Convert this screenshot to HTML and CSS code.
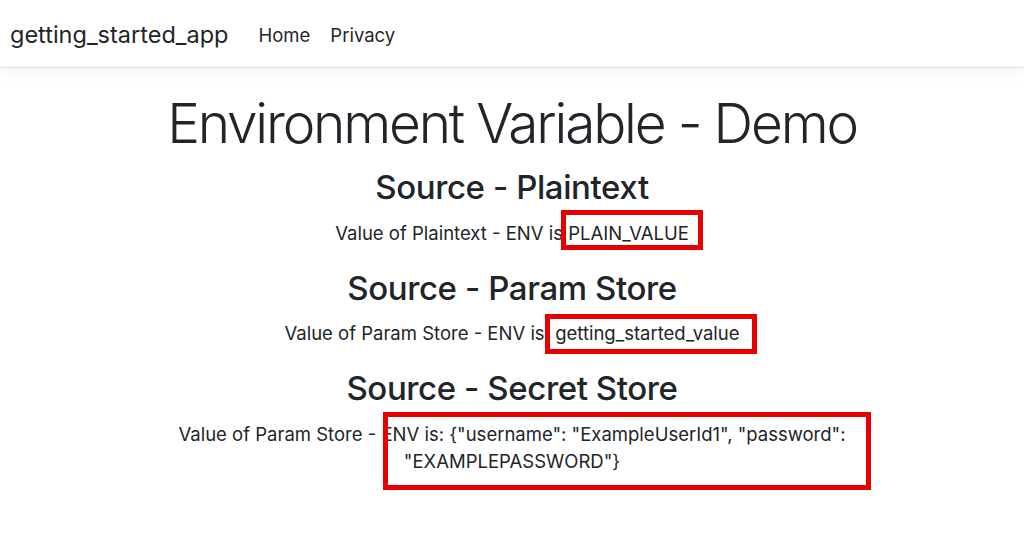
FILE: index.html
```html
<!DOCTYPE html>
<html lang="en">

<head>
    <meta charset="UTF-8">
    <meta name="viewport" content="width=device-width, initial-scale=1.0">
    <title>Home Page - getting_started_app</title>
    <link rel="stylesheet" href="styles.css">
</head>

<body>
    <header>
        <nav class="navbar">
            <a class="navbar-brand" href="#">getting_started_app</a>
            <ul class="navbar-nav">
                <li><a class="nav-link" href="#">Home</a></li>
                <li><a class="nav-link" href="#">Privacy</a></li>
            </ul>
        </nav>
    </header>

    <div class="container">
        <main class="text-center">
            <h1 class="display-4">Environment Variable - Demo</h1>

            <h2>Source - Plaintext</h2>
            <p>Value of Plaintext - ENV is <span class="mark mark-plain">PLAIN_VALUE</span></p>

            <h2>Source - Param Store</h2>
            <p>Value of Param Store - ENV is: <span class="mark mark-param">getting_started_value</span></p>

            <h2>Source - Secret Store</h2>
            <p class="secret">Value of Param Store - ENV is: {"username": "ExampleUserId1", "password": "EXAMPLEPASSWORD"}<span class="mark-box"></span></p>
        </main>
    </div>
</body>

</html>
```

FILE: styles.css
```css
body {
    margin: 0;
    font-family: Inter, "Noto Sans", "Liberation Sans", sans-serif;
    font-size: 18.5px;
    line-height: 1.5;
    color: #212529;
    background-color: #fff;
}

a {
    color: inherit;
    text-decoration: none;
}

.navbar {
    display: flex;
    align-items: center;
    height: 67px;
    padding: 0 10px;
    border-bottom: 1px solid #e1e2e6;
    box-shadow: 0 4px 14px rgba(0, 0, 0, 0.05);
}

.navbar-brand {
    font-size: 23.5px;
    margin-right: 30px;
    padding-top: 2px;
}

.navbar-nav {
    display: flex;
    gap: 20px;
    list-style: none;
    margin: 0;
    padding: 4px 0 0;
}

.nav-link {
    font-size: 18.5px;
    color: #262626;
}

.container {
    max-width: 690px;
    margin: 0 auto;
}

.text-center {
    text-align: center;
}

h1 {
    font-size: 55px;
    font-weight: 300;
    line-height: 1.2;
    margin: 22px -30px 12px;
    letter-spacing: -2.2px;
    white-space: nowrap;
}

h2 {
    font-size: 33px;
    font-weight: 500;
    line-height: 1.2;
    margin: 0 0 12px;
    letter-spacing: -0.4px;
}

p {
    margin: 0 0 22px;
    line-height: 27px;
}

.mark {
    position: relative;
}

.mark::after {
    content: "";
    position: absolute;
    border: 5px solid #e60000;
}

.mark-plain::after {
    left: -7px;
    right: -14px;
    top: -12px;
    bottom: -6px;
}

.mark-param::after {
    left: -10px;
    right: -17px;
    top: -8px;
    bottom: -10px;
}

.secret {
    position: relative;
}

.mark-box {
    position: absolute;
    left: 216px;
    right: -14px;
    top: -9px;
    bottom: -15px;
    border: 5px solid #e60000;
}
```
